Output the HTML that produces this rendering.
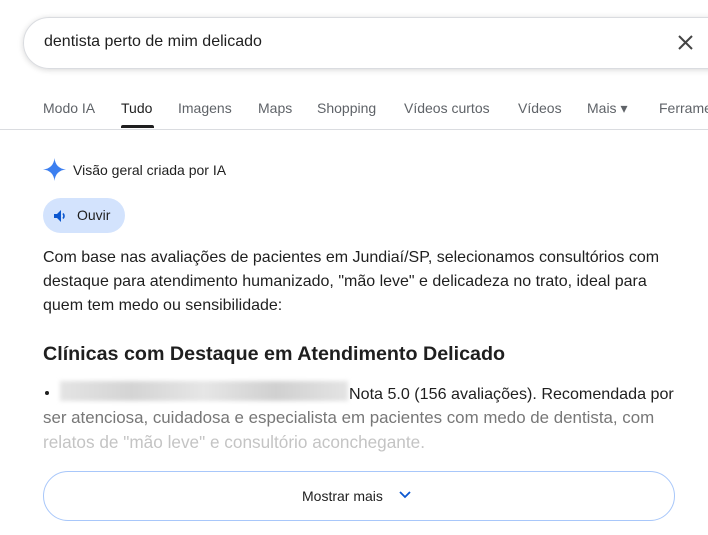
<!DOCTYPE html>
<html><head><meta charset="utf-8"><style>
body{margin:0;width:708px;height:535px;background:#fff;font-family:"Liberation Sans",sans-serif;position:relative;overflow:hidden;color:#1f1f1f}
.a{position:absolute;white-space:nowrap}
.search{position:absolute;left:23px;top:17px;width:720px;height:50px;border:1px solid #dadce0;border-radius:26px;box-shadow:0 1px 6px rgba(32,33,36,.18)}
.tabs span{position:absolute;top:100px;font-size:14px;color:#5f6368}
.p{font-size:16px;line-height:24px;color:#1f1f1f}
.q{line-height:24px}
</style></head><body>
<div class="search"></div>
<div class="a" style="left:44px;top:33px;font-size:16px;color:#1f1f1f">dentista perto de mim delicado</div>
<svg class="a" style="left:677px;top:34px" width="17" height="17" viewBox="0 0 17 17"><path d="M2 2L15 15M15 2L2 15" stroke="#444" stroke-width="2"/></svg>
<div class="tabs">
<span style="left:43px">Modo IA</span>
<span style="left:121px;color:#1f1f1f">Tudo</span>
<span style="left:178px">Imagens</span>
<span style="left:258px">Maps</span>
<span style="left:317px">Shopping</span>
<span style="left:404px">Vídeos curtos</span>
<span style="left:518px">Vídeos</span>
<span style="left:587px">Mais ▾</span>
<span style="left:659px">Ferramentas</span>
</div>
<div class="a" style="left:121px;top:125px;width:33px;height:3px;background:#1f1f1f;border-radius:2px 2px 0 0"></div>
<div class="a" style="left:0;top:129px;width:708px;height:1px;background:#dadce0"></div>
<svg class="a" style="left:43px;top:158px" width="23" height="23" viewBox="0 0 24 24"><path d="M12 0C12.5 7 17 11.5 24 12C17 12.5 12.5 17 12 24C11.5 17 7 12.5 0 12C7 11.5 11.5 7 12 0Z" fill="#3c7ff0"/></svg>
<div class="a" style="left:73px;top:162px;font-size:14px;color:#1f1f1f">Visão geral criada por IA</div>
<div class="a" style="left:43px;top:198px;width:82px;height:35px;background:#d3e3fd;border-radius:18px"></div>
<svg class="a" style="left:52px;top:208px" width="16" height="16" viewBox="0 0 16 16"><path d="M2 6H5L9 2V14L5 10H2Z" fill="#0b57d0"/><path d="M11 5.5Q13 8 11 10.5" stroke="#0b57d0" stroke-width="1.6" fill="none"/></svg>
<div class="a" style="left:77px;top:207px;font-size:14px;color:#1f1f1f">Ouvir</div>
<div class="a p" style="left:43px;top:246px">Com base nas avaliações de pacientes em Jundiaí/SP, selecionamos consultórios com<br>destaque para atendimento humanizado, "mão leve" e delicadeza no trato, ideal para<br>quem tem medo ou sensibilidade:</div>
<div class="a" style="left:43px;top:343px;font-size:19.7px;font-weight:bold;color:#1f1f1f">Clínicas com Destaque em Atendimento Delicado</div>
<div class="a" style="left:45px;top:391px;width:4px;height:4px;border-radius:50%;background:#1f1f1f"></div>
<div class="a" style="left:60px;top:381px;width:288px;height:20px;background:linear-gradient(90deg,#e4e4e4,#d4d4d4,#e6e6e6,#d0d0d0,#e4e4e4);filter:blur(2px)"></div>
<div class="a q" style="left:349px;top:382px;font-size:16.1px;color:#1f1f1f">Nota 5.0 (156 avaliações). Recomendada por</div>
<div class="a q" style="left:43px;top:406px;font-size:16.9px;color:#777">ser atenciosa, cuidadosa e especialista em pacientes com medo de dentista, com</div>
<div class="a q" style="left:43px;top:430px;font-size:17.2px;color:#c4c4c4">relatos de "mão leve" e consultório aconchegante.</div>
<div class="a" style="left:43px;top:471px;width:630px;height:48px;border:1px solid #a8c7fa;border-radius:26px"></div>
<div class="a" style="left:302px;top:488px;font-size:14px;color:#1f1f1f">Mostrar mais</div>
<svg class="a" style="left:398px;top:490px" width="14" height="10" viewBox="0 0 14 10"><path d="M2 2L7 7L12 2" stroke="#0b57d0" stroke-width="1.8" fill="none"/></svg>
</body></html>
